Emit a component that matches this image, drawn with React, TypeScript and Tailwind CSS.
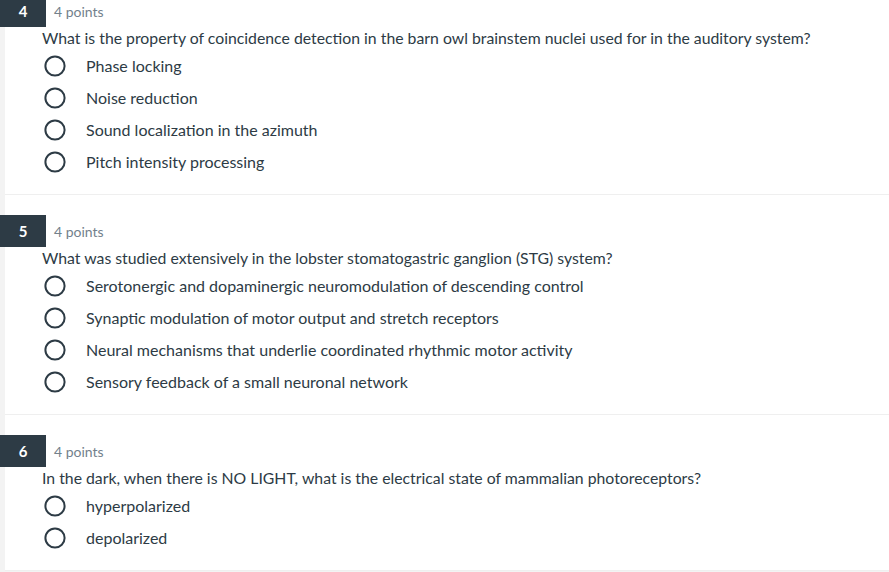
import React from "react";

type Q = { n: number; text: string; options: string[] };

const questions: Q[] = [
  {
    n: 4,
    text: "What is the property of coincidence detection in the barn owl brainstem nuclei used for in the auditory system?",
    options: ["Phase locking", "Noise reduction", "Sound localization in the azimuth", "Pitch intensity processing"],
  },
  {
    n: 5,
    text: "What was studied extensively in the lobster stomatogastric ganglion (STG) system?",
    options: [
      "Serotonergic and dopaminergic neuromodulation of descending control",
      "Synaptic modulation of motor output and stretch receptors",
      "Neural mechanisms that underlie coordinated rhythmic motor activity",
      "Sensory feedback of a small neuronal network",
    ],
  },
  {
    n: 6,
    text: "In the dark, when there is NO LIGHT, what is the electrical state of mammalian photoreceptors?",
    options: ["hyperpolarized", "depolarized"],
  },
];

function Radio() {
  return (
    <svg width="24" height="24" viewBox="0 0 24 24" className="shrink-0">
      <circle cx="12" cy="12" r="9.6" fill="white" stroke="#2d3b45" strokeWidth="2" />
    </svg>
  );
}

export default function App() {
  return (
    <div
      className="w-[889px] h-[572px] overflow-hidden bg-[#f3f3f3] text-[#2d3b45]"
      style={{ fontFamily: "Lato, 'Noto Sans', sans-serif" }}
    >
      <div className="-mt-[25px] ml-[5px] bg-white">
        {questions.map((q) => (
          <div key={q.n} className="relative border-b border-[#efefef] pt-[20px] pb-[16px]">
            <div className="-ml-[5px] flex h-[32px] items-center">
              <div className="flex h-[32px] w-[46px] items-center justify-center bg-[#2d3b45] text-[15px] font-bold text-white">
                {q.n}
              </div>
              <div className="ml-[8px] pt-[1px] text-[14px] text-[#73818c]">4 points</div>
            </div>
            <div className="flex h-[23px] items-center pb-[2px] pl-[37px] text-[15.8px]">{q.text}</div>
            <div className="flex flex-col">
              {q.options.map((o) => (
                <div key={o} className="flex h-[32px] items-center">
                  <div className="ml-[38px] flex w-[24px] justify-center">
                    <Radio />
                  </div>
                  <span className="ml-[19px] text-[16px]">{o}</span>
                </div>
              ))}
            </div>
          </div>
        ))}
      </div>
    </div>
  );
}
